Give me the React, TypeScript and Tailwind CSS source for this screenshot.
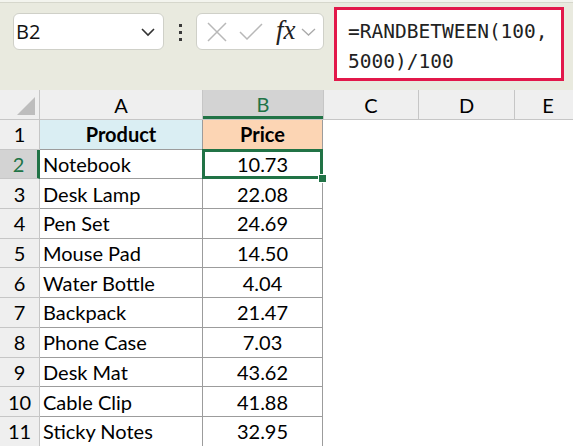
import React from "react";

const rows: [string, string][] = [
  ["Notebook", "10.73"],
  ["Desk Lamp", "22.08"],
  ["Pen Set", "24.69"],
  ["Mouse Pad", "14.50"],
  ["Water Bottle", "4.04"],
  ["Backpack", "21.47"],
  ["Phone Case", "7.03"],
  ["Desk Mat", "43.62"],
  ["Cable Clip", "41.88"],
  ["Sticky Notes", "32.95"],
];

const cellFont = { fontFamily: "Lato, 'Noto Sans', sans-serif" };

export default function App() {
  return (
    <div className="w-[573px] h-[446px] overflow-hidden bg-white relative" style={cellFont}>
      {/* Toolbar */}
      <div className="h-[90px] bg-[#e9eadf] flex flex-col">
        <div className="h-[3px] bg-[#f3f4ee] border-b border-[#d6d7cc]" />
        <div className="flex items-start flex-1">
          <div className="ml-[13px] mt-[10px] w-[151px] h-[37px] bg-white border border-[#cfd0c8] rounded-[6px] flex items-center pl-[2px] pr-[6px]">
            <span className="text-[20px] text-[#111] flex-1" style={{ fontFamily: "'Open Sans', sans-serif" }}>B2</span>
            <svg width="16" height="10" viewBox="0 0 16 10" className="mr-[1px]">
              <path d="M2 2 L8 8 L14 2" fill="none" stroke="#333" strokeWidth="1.6" />
            </svg>
          </div>
          <div className="w-[32px] mt-[21px] flex flex-col items-center gap-[4px]">
            <div className="w-[3px] h-[3px] bg-[#3a3a3a]" />
            <div className="w-[3px] h-[3px] bg-[#3a3a3a]" />
            <div className="w-[3px] h-[3px] bg-[#3a3a3a]" />
          </div>
          <div className="mt-[10px] w-[128px] h-[37px] bg-white border border-[#cfd0c8] rounded-[6px] flex items-center pl-[9px]">
            <svg width="22" height="22" viewBox="0 0 22 22">
              <path d="M2 2 L20 20 M20 2 L2 20" stroke="#b8b8b8" strokeWidth="1.5" fill="none" />
            </svg>
            <svg width="26" height="22" viewBox="0 0 26 22" className="ml-[10px]">
              <path d="M2 11 L9 18 L24 3" stroke="#b8b8b8" strokeWidth="1.5" fill="none" />
            </svg>
            <span className="ml-[12px] text-[27px] italic text-[#222] leading-none pb-[3px]" style={{ fontFamily: "'Liberation Serif', serif" }}>fx</span>
            <svg width="15" height="10" viewBox="0 0 15 10" className="ml-[5px]">
              <path d="M1 2 L7.5 8 L14 2" fill="none" stroke="#aaa" strokeWidth="1.3" />
            </svg>
          </div>
          <div className="ml-[10px] mt-[4px] w-[230px] h-[74px] bg-white border-[3px] border-[#e2184a] pl-[11px] pt-[7px]">
            <div className="text-[19.5px] leading-[30px] text-[#222]" style={{ fontFamily: "'DejaVu Sans Mono', 'Liberation Mono', monospace" }}>
              <div>=RANDBETWEEN(100,</div>
              <div>5000)/100</div>
            </div>
          </div>
        </div>
      </div>

      {/* Column headers */}
      <div className="flex h-[30px] bg-[#efefef] border-b border-[#c6c6c6] text-[20px] text-black">
        <div className="w-[40px] border-r border-[#c6c6c6] relative">
          <svg width="18" height="18" viewBox="0 0 18 18" className="absolute right-[4px] bottom-[4px]">
            <path d="M18 0 L18 18 L0 18 Z" fill="#bdbdbd" />
          </svg>
        </div>
        <div className="w-[163px] border-r border-[#c6c6c6] flex items-center justify-center">A</div>
        <div className="w-[120px] bg-[#d3d3d3] text-[#217346] border-b-[3px] border-[#217346] flex items-center justify-center pt-[2px]">B</div>
        <div className="w-[96px] border-l border-r border-[#c6c6c6] flex items-center justify-center">C</div>
        <div className="w-[96px] border-r border-[#c6c6c6] flex items-center justify-center">D</div>
        <div className="flex-1 flex items-center justify-center pl-[8px]">E</div>
      </div>

      {/* Row 1 */}
      <div className="flex h-[29.7px] text-[20px]">
        <div className="w-[40px] bg-[#efefef] border-r border-b border-[#c6c6c6] flex items-center justify-center">1</div>
        <div className="w-[163px] bg-[#daeef3] border-r border-b border-[#9c9c9c] flex items-center justify-center font-bold">Product</div>
        <div className="w-[120px] bg-[#fcd5b4] border-r border-b border-[#9c9c9c] flex items-center justify-center font-bold">Price</div>
        <div className="flex-1" />
      </div>

      {rows.map(([name, price], i) => {
        const sel = i === 0;
        return (
          <div key={name} className="flex h-[29.7px] text-[20px]">
            <div
              className={
                sel
                  ? "w-[40px] bg-[#d3d3d3] text-[#217346] border-r-[3px] border-r-[#217346] border-b border-b-[#c6c6c6] flex items-center justify-center"
                  : "w-[40px] bg-[#efefef] border-r border-b border-[#c6c6c6] flex items-center justify-center"
              }
            >
              {i + 2}
            </div>
            <div className="w-[163px] border-r border-b border-[#9c9c9c] flex items-center pl-[3px]">{name}</div>
            <div className="w-[120px] border-r border-b border-[#9c9c9c] flex items-center justify-center relative">
              {price}
              {sel && (
                <>
                  <div className="absolute z-10 left-[-1px] top-[-1px] right-[-1px] bottom-[-1px] border-[3px] border-[#217346]" />
                  <div className="absolute z-20 right-[-5px] bottom-[-5px] w-[9px] h-[9px] bg-[#217346] border border-white" />
                </>
              )}
            </div>
            <div className="flex-1" />
          </div>
        );
      })}
      <div className="flex h-[10px]">
        <div className="w-[40px] bg-[#efefef] border-r border-[#c6c6c6]" />
      </div>
    </div>
  );
}
